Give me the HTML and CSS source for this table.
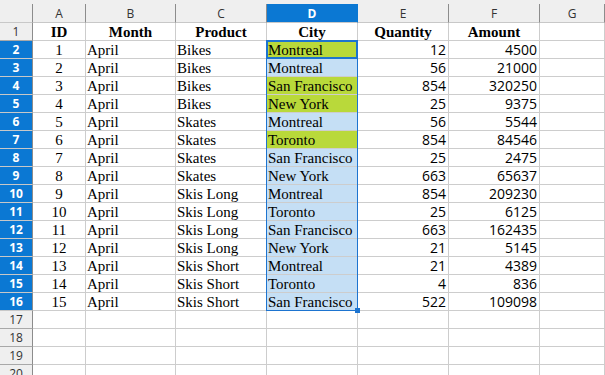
FILE: index.html
```html
<!DOCTYPE html>
<html lang="en">
<head>
    <meta charset="UTF-8">
    <meta name="viewport" content="width=device-width, initial-scale=1.0">
    <title>Sales sheet</title>
    <link rel="stylesheet" href="styles.css">
</head>
<body>
    <div class="topbar"></div>
    <div class="sheet-wrap">
        <div class="sheet" id="sheet"></div>
        <div class="selection"></div>
        <div class="cursor"></div>
        <div class="handle"></div>
    </div>

    <script>
        const rows = [
            [1, 'April', 'Bikes', 'Montreal', 12, 4500, true],
            [2, 'April', 'Bikes', 'Montreal', 56, 21000, false],
            [3, 'April', 'Bikes', 'San Francisco', 854, 320250, true],
            [4, 'April', 'Bikes', 'New York', 25, 9375, true],
            [5, 'April', 'Skates', 'Montreal', 56, 5544, false],
            [6, 'April', 'Skates', 'Toronto', 854, 84546, true],
            [7, 'April', 'Skates', 'San Francisco', 25, 2475, false],
            [8, 'April', 'Skates', 'New York', 663, 65637, false],
            [9, 'April', 'Skis Long', 'Montreal', 854, 209230, false],
            [10, 'April', 'Skis Long', 'Toronto', 25, 6125, false],
            [11, 'April', 'Skis Long', 'San Francisco', 663, 162435, false],
            [12, 'April', 'Skis Long', 'New York', 21, 5145, false],
            [13, 'April', 'Skis Short', 'Montreal', 21, 4389, false],
            [14, 'April', 'Skis Short', 'Toronto', 4, 836, false],
            [15, 'April', 'Skis Short', 'San Francisco', 522, 109098, false]
        ];

        const sheet = document.getElementById('sheet');
        let html = '<div class="corner"></div>';

        ['A', 'B', 'C', 'D', 'E', 'F', 'G'].forEach(letter => {
            const cls = letter === 'D' ? 'col-head active' : 'col-head';
            html += `<div class="${cls}">${letter}</div>`;
        });

        // header row
        html += '<div class="row-head">1</div>';
        ['ID', 'Month', 'Product', 'City', 'Quantity', 'Amount'].forEach(title => {
            html += `<div class="cell title">${title}</div>`;
        });
        html += '<div class="cell"></div>';

        rows.forEach((r, i) => {
            html += `<div class="row-head active">${i + 2}</div>`;
            html += `<div class="cell center">${r[0]}</div>`;
            html += `<div class="cell">${r[1]}</div>`;
            html += `<div class="cell">${r[2]}</div>`;
            html += `<div class="cell ${r[6] ? 'picked' : 'chosen'}">${r[3]}</div>`;
            html += `<div class="cell num">${r[4]}</div>`;
            html += `<div class="cell num">${r[5]}</div>`;
            html += '<div class="cell"></div>';
        });

        for (let n = 17; n <= 20; n++) {
            html += `<div class="row-head">${n}</div>`;
            for (let c = 0; c < 7; c++) html += '<div class="cell"></div>';
        }

        sheet.innerHTML = html;
    </script>
</body>
</html>
```

FILE: styles.css
```css
body {
    margin: 0;
    height: 375px;
    overflow: hidden;
    background-color: #fff;
    font-family: "Liberation Serif", serif;
}

.topbar {
    height: 4px;
    background-color: #efefef;
}

.sheet-wrap {
    position: relative;
}

.sheet {
    display: grid;
    grid-template-columns: 33px 53px 90px 91px 91px 91px 91px 1fr;
    grid-template-rows: 19px;
    grid-auto-rows: 18px;
}

.corner,
.col-head,
.row-head {
    box-sizing: border-box;
    background-color: #efefef;
    color: #333;
    font-family: "Open Sans", sans-serif;
    font-size: 12px;
    display: flex;
    align-items: center;
    justify-content: center;
}

.corner,
.col-head {
    border-right: 1px solid #8c8c8c;
    border-bottom: 1px solid #c8c8c8;
}

.col-head:last-child {
    border-right: none;
}

.row-head {
    border-right: 1px solid #8c8c8c;
    border-bottom: 1px solid #a8a8a8;
}

.col-head.active,
.row-head.active {
    background-color: #0b78d3;
    color: #fff;
    font-weight: bold;
    border-bottom-color: #c8c8c8;
}

.col-head.active {
    border-right-color: #0b78d3;
}

.cell {
    box-sizing: border-box;
    border-right: 1px solid #cdcdcd;
    border-bottom: 1px solid #cdcdcd;
    font-size: 15px;
    line-height: 16px;
    padding: 1px 1px 0;
    white-space: nowrap;
    overflow: hidden;
    color: #000;
}

.title {
    font-weight: bold;
    text-align: center;
}

.center {
    text-align: center;
}

.num {
    text-align: right;
    font-family: "Open Sans", sans-serif;
    font-size: 14px;
    padding-right: 2px;
}

.chosen {
    background-color: #c5dff5;
}

.picked {
    background-color: #b9d93a;
}

.selection {
    position: absolute;
    left: 266px;
    top: 36px;
    width: 92px;
    height: 271px;
    box-sizing: border-box;
    border: 1px solid #1d74d0;
    pointer-events: none;
}

.cursor {
    position: absolute;
    left: 266px;
    top: 36px;
    width: 92px;
    height: 19px;
    box-sizing: border-box;
    border: 2px solid #1d74d0;
    pointer-events: none;
}

.handle {
    position: absolute;
    left: 355px;
    top: 304px;
    width: 5px;
    height: 5px;
    background-color: #1d74d0;
}
```
